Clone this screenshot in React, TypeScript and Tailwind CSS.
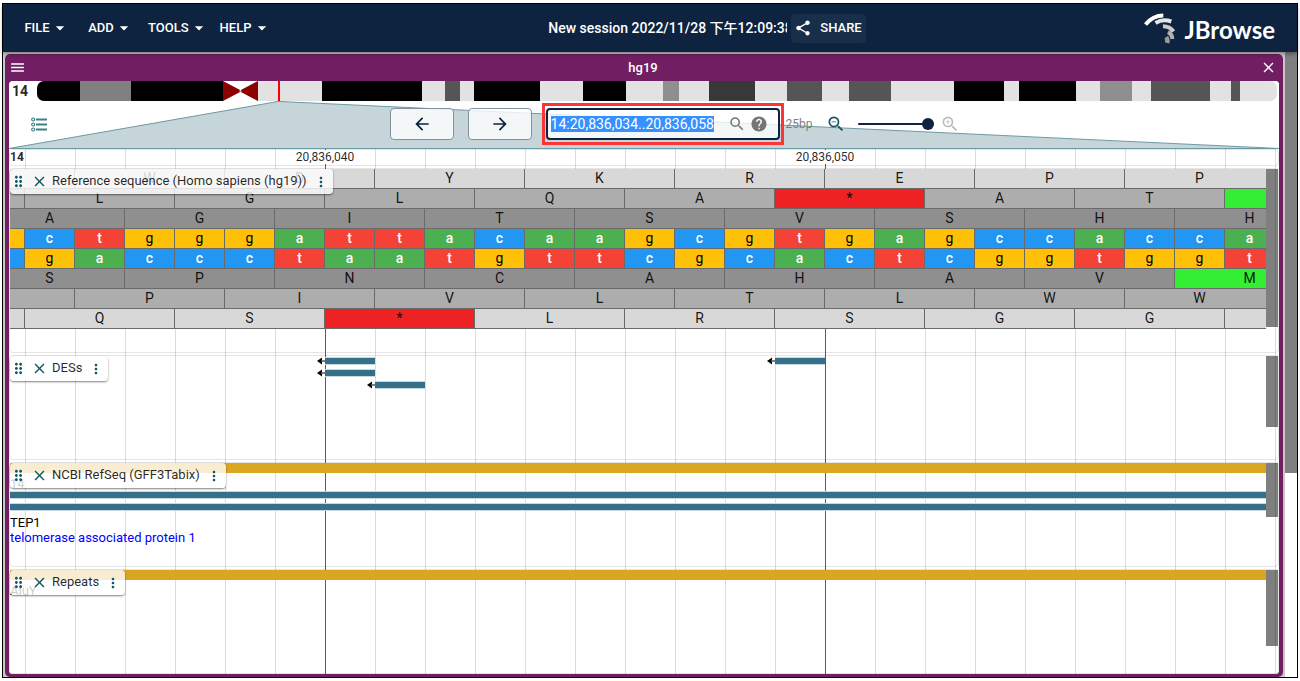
import { useEffect, useRef } from "react";
import type { ReactNode } from "react";
import {
  MdArrowBack,
  MdArrowDropDown,
  MdArrowForward,
  MdClose,
  MdDragIndicator,
  MdHelp,
  MdMenu,
  MdMoreVert,
  MdSearch,
  MdShare,
  MdZoomIn,
  MdZoomOut,
} from "react-icons/md";

/* ---------- data ---------- */

type Band = { size: number; tone: string };

const BANDS: Band[] = [
  { size: 43, tone: "bg-black" },
  { size: 51, tone: "bg-[#808080]" },
  { size: 92, tone: "bg-black" },
  { size: 35, tone: "centromere" },
  { size: 64, tone: "bg-[#e2e2e2]" },
  { size: 100, tone: "bg-black" },
  { size: 23, tone: "bg-[#e2e2e2]" },
  { size: 15, tone: "bg-[#555555]" },
  { size: 14, tone: "bg-[#e2e2e2]" },
  { size: 66, tone: "bg-black" },
  { size: 43, tone: "bg-[#e2e2e2]" },
  { size: 43, tone: "bg-black" },
  { size: 37, tone: "bg-[#e2e2e2]" },
  { size: 16, tone: "bg-[#8f8f8f]" },
  { size: 30, tone: "bg-[#e2e2e2]" },
  { size: 46, tone: "bg-[#383838]" },
  { size: 32, tone: "bg-[#e2e2e2]" },
  { size: 35, tone: "bg-[#555555]" },
  { size: 27, tone: "bg-[#e2e2e2]" },
  { size: 42, tone: "bg-[#555555]" },
  { size: 63, tone: "bg-[#e2e2e2]" },
  { size: 50, tone: "bg-black" },
  { size: 15, tone: "bg-[#e2e2e2]" },
  { size: 57, tone: "bg-black" },
  { size: 24, tone: "bg-[#e2e2e2]" },
  { size: 32, tone: "bg-[#8f8f8f]" },
  { size: 19, tone: "bg-[#e2e2e2]" },
  { size: 59, tone: "bg-[#555555]" },
  { size: 21, tone: "bg-[#e2e2e2]" },
  { size: 9, tone: "bg-[#555555]" },
  { size: 37, tone: "bg-[#e2e2e2]" },
];

const BASES = "gctgggattacaagcgtgagccacca";
const COMPLEMENT = "cgaccctaatgttcgcactcggtggt";

const BASE_STYLE: Record<string, string> = {
  a: "bg-[#4caf50] font-medium text-white",
  c: "bg-[#2196f3] font-medium text-white",
  g: "bg-[#ffc107] text-black",
  t: "bg-[#f44336] font-medium text-white",
};

type Frame = { shift: string; tone: string; residues: string };

const FORWARD: Frame[] = [
  { shift: "-ml-[85px]", tone: "bg-[#d8d8d8]", residues: " WDYKREPP" },
  { shift: "-ml-[135px]", tone: "bg-[#adadad]", residues: " LGLQA*ATm" },
  { shift: "-ml-[35px]", tone: "bg-[#8f8f8f]", residues: "AGITSVSHH" },
];

const REVERSE: Frame[] = [
  { shift: "-ml-[35px]", tone: "bg-[#8f8f8f]", residues: "SPNCAHAVM" },
  { shift: "-ml-[85px]", tone: "bg-[#adadad]", residues: " PIVLTLWW" },
  { shift: "-ml-[135px]", tone: "bg-[#d8d8d8]", residues: " QS*LRSGG " },
];

/* ---------- header ---------- */

function JBrowseLogo() {
  return (
    <div className="flex items-center gap-2">
      <svg viewBox="0 0 32 32" className="size-8" fill="none" aria-hidden="true">
        <path d="M1.5 12.500C6 7 12 3.500 19.300 3.500" stroke="#ffffff" strokeWidth="4" />
        <path d="M11.500 11C16 8.200 21.500 7.500 27.300 9.500" stroke="#e6e6e6" strokeWidth="4" />
        <path d="M19 14.300C23.500 14.300 27.200 16.200 29.500 19.500" stroke="#cccccc" strokeWidth="4" />
        <path d="M24 20C26.800 21.500 28.300 24 28.300 27" stroke="#b3b3b3" strokeWidth="4" />
        <path d="M22.300 25C23.500 27 23.800 29 23.300 31" stroke="#999999" strokeWidth="4.500" />
      </svg>
      <span className="pt-1 font-[Lato,sans-serif] text-[24px] leading-8 font-bold">JBrowse</span>
    </div>
  );
}

function Header() {
  return (
    <header className="relative z-10 flex h-12 items-center bg-[#0d233f] text-white shadow-[0_2px_4px_rgba(0,0,0,0.35)]">
      <nav className="flex flex-1 items-center pl-3">
        {["FILE", "ADD", "TOOLS", "HELP"].map((name) => (
          <button
            key={name}
            type="button"
            className="flex min-w-16 items-center justify-center px-[5px] text-[13px] leading-5 font-medium"
          >
            {name}
            <MdArrowDropDown className="size-5" />
          </button>
        ))}
      </nav>
      <div className="flex items-center gap-1">
        <input
          aria-label="Session name"
          defaultValue="New session 2022/11/28 下午12:09:38"
          className="w-[239px] bg-transparent text-[14px] leading-5 font-medium outline-none"
        />
        <button
          type="button"
          className="flex h-[29px] items-center gap-2 rounded bg-white/5 pr-1 pl-[3px] text-[13px] font-medium"
        >
          <MdShare className="size-[18px]" />
          SHARE
        </button>
      </div>
      <div className="flex w-1/3 justify-end pr-[22px]">
        <JBrowseLogo />
      </div>
    </header>
  );
}

/* ---------- overview and navigation ---------- */

function Overview() {
  return (
    <div className="relative flex h-5 rounded-tl bg-white">
      <span className="w-7 pl-[3px] text-[14px] leading-5 font-bold text-black/85">14</span>
      <div className="mr-0.5 flex flex-1 overflow-hidden rounded-[7px]">
        {BANDS.map((band, i) =>
          band.tone === "centromere" ? (
            <svg
              key={i}
              viewBox="0 0 35 20"
              preserveAspectRatio="none"
              className="h-5 w-0"
              style={{ flexGrow: band.size }}
              aria-hidden="true"
            >
              <path d="M0 0L19 10L0 20ZM35 0L16 10L35 20Z" fill="#8b0000" />
            </svg>
          ) : (
            <div key={i} className={band.tone} style={{ flex: `${band.size} 1 0` }} />
          ),
        )}
      </div>
      <div className="absolute top-0 left-[269px] h-5 w-0.5 bg-[#ff0000]" />
    </div>
  );
}

function TrackListIcon() {
  return (
    <svg viewBox="0 0 17 15" className="h-[15px] w-[17px]" fill="none" stroke="#3f7f86" aria-hidden="true">
      {[2.5, 7.5, 12.5].map((y) => (
        <g key={y}>
          <circle cx="2.200" cy={y} r="1.500" strokeWidth="1.200" />
          <path d={`M5 ${y}H16`} strokeWidth="1.800" />
        </g>
      ))}
    </svg>
  );
}

function Navigation() {
  const location = useRef<HTMLInputElement>(null);
  useEffect(() => {
    location.current?.focus();
    location.current?.select();
  }, []);

  return (
    <div className="relative flex h-12 items-center pb-0.5">
      <svg
        viewBox="0 0 1270 48"
        preserveAspectRatio="none"
        className="absolute inset-0 h-full w-full"
        aria-hidden="true"
      >
        <path d="M0 47.500L269 0.500H271L1270 47.500Z" fill="#c6d5d9" stroke="#6c9aa1" />
      </svg>
      <button type="button" aria-label="Open track selector" className="relative flex w-[62px] justify-center pr-0.5">
        <TrackListIcon />
      </button>
      <div className="relative flex flex-1 items-center justify-center">
        <div className="flex gap-3.5">
          <button
            type="button"
            aria-label="Pan left"
            className="flex h-8 w-16 items-center justify-center rounded border border-[#8390a0] bg-white/80 text-[#0d233f]"
          >
            <MdArrowBack className="size-5" />
          </button>
          <button
            type="button"
            aria-label="Pan right"
            className="flex h-8 w-16 items-center justify-center rounded border border-[#8390a0] bg-white/80 text-[#0d233f]"
          >
            <MdArrowForward className="size-5" />
          </button>
        </div>
        <div className="relative ml-3.5 flex h-8 w-[234px] items-center rounded border-2 border-[#0d233f] bg-white/80 pr-2.5 pl-[3px]">
          <input
            ref={location}
            aria-label="Location"
            defaultValue="14:20,836,034..20,836,058"
            className="h-4 min-w-0 flex-1 bg-transparent text-[14px] leading-4 outline-none selection:bg-[rgba(51,144,255,0.99)] selection:text-white"
          />
          <button type="button" aria-label="Search" className="ml-1.5 text-[#757575]">
            <MdSearch className="size-[18px]" />
          </button>
          <button type="button" aria-label="Help" className="ml-1 text-[#757575]">
            <MdHelp className="size-[18px]" />
          </button>
          <div className="pointer-events-none absolute -inset-x-1.5 -inset-y-[7px] border-3 border-[#fb3535]" />
        </div>
        <span className="ml-1.5 text-[12px] leading-4 text-[#808080]">25bp</span>
        <button type="button" aria-label="Zoom out" className="ml-3.5 text-[#135560]">
          <MdZoomOut className="size-5" />
        </button>
        <input
          type="range"
          aria-label="Zoom level"
          defaultValue={100}
          className="ml-3 h-0.5 w-[76px] appearance-none rounded bg-[#0d233f] [&::-webkit-slider-thumb]:size-3 [&::-webkit-slider-thumb]:appearance-none [&::-webkit-slider-thumb]:rounded-full [&::-webkit-slider-thumb]:bg-[#0d233f]"
        />
        <button type="button" aria-label="Zoom in" disabled className="ml-1.5 text-[#bdbdbd]">
          <MdZoomIn className="size-5" />
        </button>
      </div>
    </div>
  );
}

/* ---------- sequence ---------- */

function AminoRow({ frame }: { frame: Frame }) {
  return (
    <div className={`flex h-5 ${frame.shift}`}>
      {frame.residues.split("").map((aa, i) => {
        const start = aa.toLowerCase() === "m";
        const tone = aa === "*" ? "bg-[#ee2222]" : start ? "bg-[#33ee33]" : frame.tone;
        return (
          <span
            key={i}
            className={`w-[150px] shrink-0 border-r border-b border-[#6a6a6a] text-center text-[14px] leading-[18px] text-black/90 ${tone}`}
          >
            {aa === "m" ? null : aa}
          </span>
        );
      })}
    </div>
  );
}

function BaseRow({ bases }: { bases: string }) {
  return (
    <div className="-ml-[35px] flex h-5">
      {bases.split("").map((base, i) => (
        <span
          key={i}
          className={`w-[50px] shrink-0 border-r border-b border-[#6a6a6a] text-center text-[14px] leading-[18px] ${BASE_STYLE[base]}`}
        >
          {i > 0 ? base : null}
        </span>
      ))}
    </div>
  );
}

/* ---------- tracks ---------- */

function TrackLabel({ name }: { name: string }) {
  return (
    <div className="absolute top-0 left-0 flex h-[25px] items-center rounded bg-white/80 text-[#135560] shadow-[0_1px_2px_rgba(0,0,0,0.5)]">
      <MdDragIndicator className="size-[17px]" />
      <button type="button" aria-label={`Close ${name}`} className="ml-1">
        <MdClose className="size-[17px]" />
      </button>
      <span className="ml-1 pb-0.5 text-[13px] leading-5 whitespace-nowrap text-black/85">{name}</span>
      <button type="button" aria-label={`${name} menu`} className="mr-1 ml-1.5">
        <MdMoreVert className="size-4" />
      </button>
    </div>
  );
}

type TrackProps = { name: string; height: string; thumb: string; children: ReactNode };

function Track({ name, height, thumb, children }: TrackProps) {
  return (
    <section className={`relative flex rounded border border-black/10 ${height}`}>
      <div className="min-w-0 flex-1 overflow-hidden">{children}</div>
      <div className={`w-3 shrink-0 bg-black/50 ${thumb}`} />
      <TrackLabel name={name} />
    </section>
  );
}

function Feature({ x, y }: { x: number; y: number }) {
  return (
    <g transform={`translate(${x} ${y})`}>
      <path d="M-8 4L-3 0.500V7.500Z" fill="#000" />
      <path d="M-4 4H0" stroke="#555" strokeWidth="1.500" />
      <rect width="50" height="8" fill="#c6dae2" />
      <rect y="1" width="50" height="6" fill="#356f88" />
    </g>
  );
}

function Transcript() {
  return <div className="h-2 border-y border-[#c6dae2] bg-[#356f88]" />;
}

function Tracks() {
  return (
    <div className="relative flex flex-1 flex-col gap-0.5 bg-white bg-[linear-gradient(to_right,#dcdcdc_1px,transparent_1px)] bg-[length:50px_100%] bg-[position:16px_0]">
      <div className="absolute inset-y-0 left-[316px] w-px bg-[#5c5c5c]" />
      <div className="absolute inset-y-0 left-[816px] w-px bg-[#5c5c5c]" />

      <div className="relative h-[17px] rounded border border-black/10 text-[12px] leading-[14px] text-black/85">
        <span className="bg-white pr-px font-bold">14</span>
        <span className="absolute top-0 left-[315px] -translate-x-1/2 bg-white">20,836,040</span>
        <span className="absolute top-0 left-[815px] -translate-x-1/2 bg-white">20,836,050</span>
      </div>

      <Track name="Reference sequence (Homo sapiens (hg19))" height="h-[185px]" thumb="h-[158px]">
        {FORWARD.map((frame) => (
          <AminoRow key={frame.residues} frame={frame} />
        ))}
        <BaseRow bases={BASES} />
        <BaseRow bases={COMPLEMENT} />
        {REVERSE.map((frame) => (
          <AminoRow key={frame.residues} frame={frame} />
        ))}
      </Track>

      <Track name="DESs" height="h-[105px]" thumb="h-[71px]">
        <svg className="h-10 w-full" aria-hidden="true">
          <Feature x={315} y={1} />
          <Feature x={315} y={13} />
          <Feature x={365} y={25} />
          <Feature x={765} y={1} />
        </svg>
      </Track>

      <Track name="NCBI RefSeq (GFF3Tabix)" height="h-[105px]" thumb="h-[54px]">
        <div className="h-2.5 bg-[#daa520]" />
        <p className="h-[18px] pt-[3px] text-[13px] leading-[15px] text-black">14</p>
        <div className="flex flex-col gap-1">
          <Transcript />
          <Transcript />
        </div>
        <p className="pt-1 text-[13px] leading-[15px] text-black">TEP1</p>
        <p className="text-[13px] leading-[15px] text-[#0000ff]">telomerase associated protein 1</p>
      </Track>

      <Track name="Repeats" height="min-h-[105px] flex-1" thumb="h-[76px]">
        <div className="h-2.5 bg-[#daa520]" />
        <p className="pt-[3px] text-[13px] leading-[15px] text-black">AluY</p>
      </Track>
    </div>
  );
}

/* ---------- page ---------- */

export default function App() {
  return (
    <div className="flex min-h-screen bg-white px-0.5 py-[3px] font-[Roboto,'Noto_Sans_CJK_SC',sans-serif]">
      <div className="flex min-w-0 flex-1 flex-col border border-black">
        <Header />
        <main className="flex flex-1 bg-[#c8c8c8]">
          <div className="flex min-w-0 flex-1 px-0.5 pt-0.5">
            <section className="flex min-w-0 flex-1 flex-col rounded-[5px] bg-[#721e63] px-1 pb-[3px]">
              <div className="flex h-[27px] items-center text-white">
                <button type="button" aria-label="View menu">
                  <MdMenu className="size-[17px]" />
                </button>
                <h1 className="flex-1 text-center text-[13px] leading-5 font-medium">hg19</h1>
                <button type="button" aria-label="Close view" className="mr-0.5">
                  <MdClose className="size-[17px]" />
                </button>
              </div>
              <div className="flex flex-1 flex-col overflow-hidden rounded bg-white">
                <Overview />
                <Navigation />
                <Tracks />
              </div>
            </section>
          </div>
          <div className="w-3 bg-white">
            <div className="h-[421px] bg-[#808080]" />
          </div>
        </main>
      </div>
    </div>
  );
}
